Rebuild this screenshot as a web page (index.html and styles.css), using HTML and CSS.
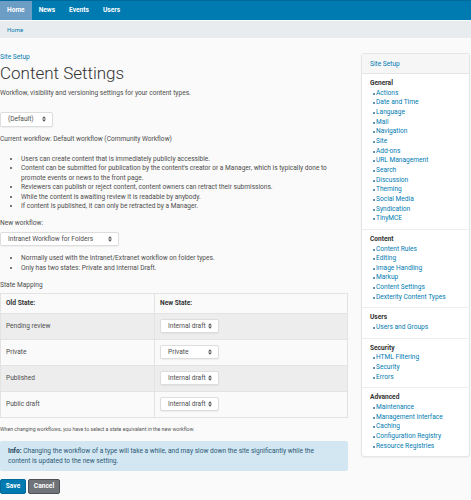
FILE: index.html
```html
<!DOCTYPE html>
<html lang="en">
<head>
<meta charset="UTF-8">
<meta name="viewport" content="width=device-width, initial-scale=1.0">
<title>Content Settings</title>
<link rel="stylesheet" href="styles.css">
</head>
<body>

<nav class="navbar">
    <a class="tab active" href="#">Home</a>
    <a class="tab" href="#">News</a>
    <a class="tab" href="#">Events</a>
    <a class="tab" href="#">Users</a>
</nav>
<div class="crumbs"><a href="#">Home</a></div>

<div class="page">
    <div class="main">
        <a class="setup-link" href="#">Site Setup</a>
        <h1>Content Settings</h1>
        <p class="desc">Workflow, visibility and versioning settings for your content types.</p>

        <div class="select sel-type">(Default)
            <svg class="arrows" width="4" height="6" viewBox="0 0 4 6"><path d="M0 2.4 L2 0.3 L4 2.4 Z M0 3.6 L2 5.7 L4 3.6 Z" fill="#555"/></svg>
        </div>

        <p class="current">Current workflow: Default workflow (Community Workflow)</p>
        <ul class="bullets first">
            <li>Users can create content that is immediately publicly accessible.</li>
            <li>Content can be submitted for publication by the content's creator or a Manager, which is typically done to promote events or news to the front page.</li>
            <li>Reviewers can publish or reject content, content owners can retract their submissions.</li>
            <li>While the content is awaiting review it is readable by anybody.</li>
            <li>If content is published, it can only be retracted by a Manager.</li>
        </ul>

        <p class="label">New workflow:</p>
        <div class="select sel-workflow">Intranet Workflow for Folders
            <svg class="arrows" width="4" height="6" viewBox="0 0 4 6"><path d="M0 2.4 L2 0.3 L4 2.4 Z M0 3.6 L2 5.7 L4 3.6 Z" fill="#555"/></svg>
        </div>
        <ul class="bullets second">
            <li>Normally used with the Intranet/Extranet workflow on folder types.</li>
            <li>Only has two states: Private and Internal Draft.</li>
        </ul>

        <p class="label mapping">State Mapping</p>
        <table class="states">
            <tr class="head">
                <th class="old">Old State:</th>
                <th>New State:</th>
            </tr>
            <tr class="shade">
                <td>Pending review</td>
                <td><div class="select sel-state">Internal draft
                    <svg class="arrows" width="4" height="6" viewBox="0 0 4 6"><path d="M0 2.4 L2 0.3 L4 2.4 Z M0 3.6 L2 5.7 L4 3.6 Z" fill="#555"/></svg></div></td>
            </tr>
            <tr>
                <td>Private</td>
                <td><div class="select sel-state">Private
                    <svg class="arrows" width="4" height="6" viewBox="0 0 4 6"><path d="M0 2.4 L2 0.3 L4 2.4 Z M0 3.6 L2 5.7 L4 3.6 Z" fill="#555"/></svg></div></td>
            </tr>
            <tr class="shade">
                <td>Published</td>
                <td><div class="select sel-state">Internal draft
                    <svg class="arrows" width="4" height="6" viewBox="0 0 4 6"><path d="M0 2.4 L2 0.3 L4 2.4 Z M0 3.6 L2 5.7 L4 3.6 Z" fill="#555"/></svg></div></td>
            </tr>
            <tr>
                <td>Public draft</td>
                <td><div class="select sel-state">Internal draft
                    <svg class="arrows" width="4" height="6" viewBox="0 0 4 6"><path d="M0 2.4 L2 0.3 L4 2.4 Z M0 3.6 L2 5.7 L4 3.6 Z" fill="#555"/></svg></div></td>
            </tr>
        </table>

        <p class="note">When changing workflows, you have to select a state equivalent in the new workflow.</p>

        <div class="info"><b>Info:</b> Changing the workflow of a type will take a while, and may slow down the site significantly while the content is updated to the new setting.</div>

        <div class="buttons">
            <button class="btn save">Save</button>
            <button class="btn cancel">Cancel</button>
        </div>
    </div>

    <aside class="portlet">
        <div class="portlet-head"><a href="#">Site Setup</a></div>
        <div class="group">
            <h3>General</h3>
            <ul>
                <li><a href="#">Actions</a></li>
                <li><a href="#">Date and Time</a></li>
                <li><a href="#">Language</a></li>
                <li><a href="#">Mail</a></li>
                <li><a href="#">Navigation</a></li>
                <li><a href="#">Site</a></li>
                <li><a href="#">Add-ons</a></li>
                <li><a href="#">URL Management</a></li>
                <li><a href="#">Search</a></li>
                <li><a href="#">Discussion</a></li>
                <li><a href="#">Theming</a></li>
                <li><a href="#">Social Media</a></li>
                <li><a href="#">Syndication</a></li>
                <li><a href="#">TinyMCE</a></li>
            </ul>
        </div>
        <div class="group">
            <h3>Content</h3>
            <ul>
                <li><a href="#">Content Rules</a></li>
                <li><a href="#">Editing</a></li>
                <li><a href="#">Image Handling</a></li>
                <li><a href="#">Markup</a></li>
                <li><a href="#">Content Settings</a></li>
                <li><a href="#">Dexterity Content Types</a></li>
            </ul>
        </div>
        <div class="group">
            <h3>Users</h3>
            <ul>
                <li><a href="#">Users and Groups</a></li>
            </ul>
        </div>
        <div class="group">
            <h3>Security</h3>
            <ul>
                <li><a href="#">HTML Filtering</a></li>
                <li><a href="#">Security</a></li>
                <li><a href="#">Errors</a></li>
            </ul>
        </div>
        <div class="group">
            <h3>Advanced</h3>
            <ul>
                <li><a href="#">Maintenance</a></li>
                <li><a href="#">Management Interface</a></li>
                <li><a href="#">Caching</a></li>
                <li><a href="#">Configuration Registry</a></li>
                <li><a href="#">Resource Registries</a></li>
            </ul>
        </div>
    </aside>
</div>

</body>
</html>
```

FILE: styles.css
```css
body {
    margin: 0;
    background-color: #fafafa;
    color: #4d4d4d;
    font-family: Roboto, "Liberation Sans", sans-serif;
    font-size: 6.6px;
    line-height: 10px;
}
a {
    color: #007bb1;
    text-decoration: none;
}
p {
    margin: 0;
}

/* top navigation */
.navbar {
    display: flex;
    height: 20px;
    background-color: #007bb1;
    border-top: 1px solid #006a9c;
    box-sizing: border-box;
}
.tab {
    padding: 0 7px;
    color: #fff;
    font-weight: bold;
    line-height: 19px;
}
.tab.active {
    background-color: #6c9dc4;
}
.crumbs {
    margin-top: 1px;
    height: 17px;
    padding-left: 7px;
    background-color: #e9ecef;
    font-size: 6px;
    line-height: 17px;
}

.page {
    display: flex;
    gap: 13px;
}
.main {
    width: 348px;
    padding-top: 14px;
}
.setup-link {
    display: block;
    line-height: 10px;
}
h1 {
    margin: 1px 0 0;
    font-size: 17px;
    font-weight: 300;
    line-height: 20px;
    color: #333;
}
.desc {
    margin-top: 5px;
}

/* fake select boxes */
.select {
    position: relative;
    box-sizing: border-box;
    height: 15px;
    padding-left: 7px;
    background-color: #fff;
    border: 1px solid #ddd;
    border-radius: 2px;
    box-shadow: 0 1px 1px rgba(0, 0, 0, 0.05);
    color: #4d4d4d;
    line-height: 13px;
}
.arrows {
    position: absolute;
    top: 3px;
    right: 6px;
}
.sel-type {
    width: 53px;
    margin-top: 14px;
}
.sel-workflow {
    width: 119px;
    margin-top: 4px;
    height: 14px;
    line-height: 12px;
}
.sel-state {
    width: 59px;
    height: 14px;
    line-height: 12px;
}

.current {
    margin-top: 7px;
}
.label {
    margin-top: 7px;
}
.bullets {
    margin: 0;
    padding-left: 21px;
    line-height: 9.4px;
}
.bullets.first {
    margin-top: 11px;
}
.bullets.second {
    margin-top: 8px;
    line-height: 9.6px;
}
.mapping {
    margin-top: 6px;
}

/* state mapping table */
.states {
    width: 348px;
    margin-top: 3px;
    border-collapse: collapse;
    border: 1px solid #e3e3e3;
}
.states th,
.states td {
    border: 1px solid #e3e3e3;
    padding: 0 0 0 5px;
    text-align: left;
}
.states th {
    height: 19px;
    color: #333;
    font-weight: bold;
}
.states td {
    height: 25px;
}
.states th.old {
    width: 148px;
}
.states tr.shade td {
    background-color: #ededed;
}

.note {
    margin-top: 7px;
    font-size: 5.2px;
    line-height: 8px;
    color: #555;
}
.info {
    margin-top: 8px;
    padding: 5px 24px 5px 8px;
    background-color: #d2e7f2;
    border-radius: 2px;
    color: #2c5775;
    line-height: 10px;
}
.info b {
    color: #24445e;
}

.buttons {
    display: flex;
    gap: 2px;
    margin-top: 8px;
}
.btn {
    height: 15px;
    padding: 0 4px;
    border-radius: 2px;
    color: #fff;
    font-family: Roboto, "Liberation Sans", sans-serif;
    font-size: 6.6px;
    font-weight: bold;
}
.save {
    width: 26px;
    background-color: #007bb1;
    border: 1px solid #006a9c;
}
.cancel {
    width: 32px;
    background-color: #707479;
    border: 1px solid #4d5156;
}

/* site setup portlet */
.portlet {
    width: 107px;
    margin-top: 15px;
    align-self: flex-start;
    background-color: #fff;
    border: 1px solid #e5e5e5;
    border-radius: 3px;
    box-shadow: 0 1px 2px rgba(0, 0, 0, 0.05);
}
.portlet-head {
    height: 19px;
    padding-left: 8px;
    background-color: #f6f6f6;
    border-bottom: 1px solid #e5e5e5;
    line-height: 20px;
}
.group {
    padding: 5px 0 5px 8px;
    border-top: 1px solid #eee;
    line-height: 9.65px;
}
.portlet-head + .group {
    border-top: none;
}
.group h3 {
    margin: 0;
    font-size: 6.6px;
    color: #333;
}
.group ul {
    margin: 0;
    padding: 0 0 0 6px;
    list-style: none;
}
.group li {
    position: relative;
}
.group li::before {
    content: "";
    position: absolute;
    left: -3.5px;
    top: 4px;
    width: 2px;
    height: 2px;
    border-radius: 50%;
    background-color: #2a6f9a;
}
```
